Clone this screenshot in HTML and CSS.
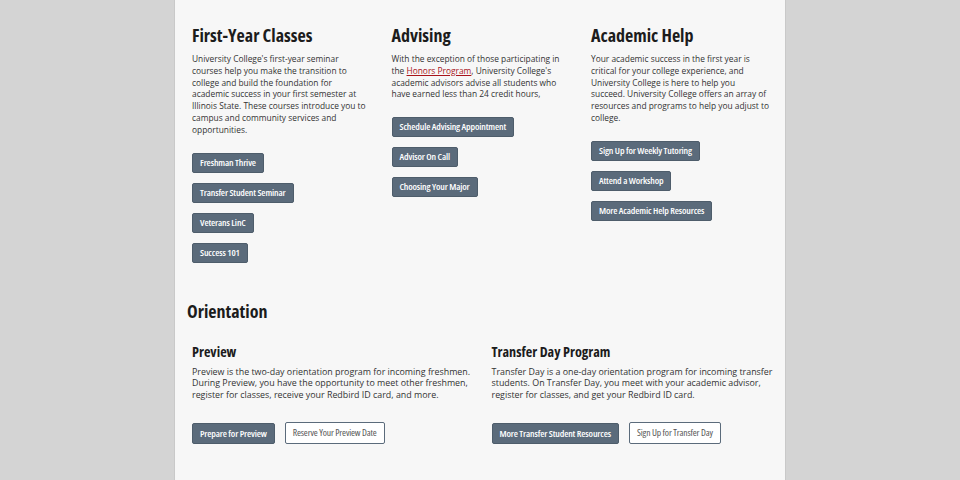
FILE: index.html
```html
<!DOCTYPE html>
<html lang="en">
<head>
<meta charset="utf-8">
<title>University College</title>
<link rel="stylesheet" href="styles.css">
</head>
<body>
<main class="page">
  <section class="columns">
    <div class="col">
      <h2 class="title">First-Year Classes</h2>
      <p class="text">University College's first-year seminar courses help you make the transition to college and build the foundation for academic success in your first semester at Illinois State. These courses introduce you to campus and community services and opportunities.</p>
      <div class="btns">
        <a class="btn">Freshman Thrive</a>
        <a class="btn">Transfer Student Seminar</a>
        <a class="btn">Veterans LinC</a>
        <a class="btn">Success 101</a>
      </div>
    </div>
    <div class="col">
      <h2 class="title">Advising</h2>
      <p class="text">With the exception of those participating in the <a class="link">Honors Program</a>, University College's academic advisors advise all students who have earned less than 24 credit hours,</p>
      <div class="btns">
        <a class="btn">Schedule Advising Appointment</a>
        <a class="btn">Advisor On Call</a>
        <a class="btn">Choosing Your Major</a>
      </div>
    </div>
    <div class="col col-last">
      <h2 class="title">Academic Help</h2>
      <p class="text">Your academic success in the first year is critical for your college experience, and University College is here to help you succeed. University College offers an array of resources and programs to help you adjust to college.</p>
      <div class="btns">
        <a class="btn">Sign Up for Weekly Tutoring</a>
        <a class="btn">Attend a Workshop</a>
        <a class="btn">More Academic Help Resources</a>
      </div>
    </div>
  </section>
  <section class="orientation">
    <h2 class="title">Orientation</h2>
    <div class="pair">
      <div class="half">
        <h3 class="subtitle">Preview</h3>
        <p class="text">Preview is the two-day orientation program for incoming freshmen. During Preview, you have the opportunity to meet other freshmen, register for classes, receive your Redbird ID card, and more.</p>
        <div class="row">
          <a class="btn">Prepare for Preview</a>
          <a class="btn outline">Reserve Your Preview Date</a>
        </div>
      </div>
      <div class="half half-last">
        <h3 class="subtitle">Transfer Day Program</h3>
        <p class="text">Transfer Day is a one-day orientation program for incoming transfer students. On Transfer Day, you meet with your academic advisor, register for classes, and get your Redbird ID card.</p>
        <div class="row">
          <a class="btn">More Transfer Student Resources</a>
          <a class="btn outline">Sign Up for Transfer Day</a>
        </div>
      </div>
    </div>
  </section>
</main>
</body>
</html>
```
FILE: styles.css
```css
html, body {
  margin: 0;
  padding: 0;
  background: #d4d4d4;
  height: 100%;
}
body {
  font-family: "Open Sans", "Liberation Sans", sans-serif;
  color: #333;
}
.page {
  width: 612px;
  margin: 0 auto;
  min-height: 480px;
  box-sizing: border-box;
  background: #f7f7f7;
  border-left: 1px solid #c9c9c9;
  border-right: 1px solid #c9c9c9;
  padding: 22px 0 0 17px;
}
.columns {
  display: flex;
}
.col {
  flex: none;
  width: 199.5px;
  padding-right: 21px;
  box-sizing: border-box;
}
.col-last {
  width: 196px;
  padding-right: 16px;
}
.title {
  margin: 0;
  font-size: 18px;
  font-weight: 700;
  font-stretch: condensed;
  color: #1c1c1c;
  line-height: 26px;
}
.text {
  margin: 5px 0 0;
  font-size: 8.4px;
  line-height: 11.8px;
  color: #333;
}
.link {
  color: #a8141a;
  text-decoration: underline;
}
.btns {
  display: flex;
  flex-direction: column;
  align-items: flex-start;
  gap: 10px;
  margin-top: 17px;
}
.btn {
  display: inline-block;
  background: #5b6b7b;
  color: #fff;
  font-size: 9.6px;
  font-weight: 600;
  font-stretch: condensed;
  letter-spacing: -0.15px;
  line-height: 18px;
  padding: 0 7px;
  border: 1px solid #4e5d6b;
  border-radius: 2px;
  white-space: nowrap;
}
.btn.outline {
  background: #fff;
  color: #555;
  border-color: #5b6b7b;
  font-weight: 400;
}
.orientation {
  margin-top: 35px;
  margin-left: -5px;
}
.pair {
  display: flex;
  margin-top: 18px;
  padding-left: 5px;
}
.half {
  flex: none;
  width: 299.5px;
  padding-right: 10px;
  box-sizing: border-box;
}
.half-last {
  width: 292px;
  padding-right: 4px;
}
.half .text {
  margin-top: 4px;
  font-size: 8.9px;
  line-height: 11.6px;
}
.subtitle {
  margin: 0;
  font-size: 14.2px;
  font-weight: 700;
  font-stretch: condensed;
  color: #1c1c1c;
  line-height: 20px;
}
.row {
  display: flex;
  align-items: center;
  gap: 10px;
  margin-top: 22px;
}
.row .btn {
  line-height: 19px;
}
.row .btn.outline {
  line-height: 20px;
}
```
